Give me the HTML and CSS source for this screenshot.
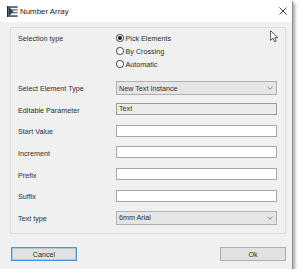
FILE: index.html
```html
<!DOCTYPE html>
<html>
<head>
<meta charset="utf-8">
<link rel="stylesheet" href="styles.css">
</head>
<body>
<div class="window">
  <div class="titlebar">
    <svg class="app-icon" width="11" height="11" viewBox="0 0 11 11">
      <rect x="0" y="0" width="1.6" height="11" fill="#1f2d3a"/>
      <polygon points="1.6,0.6 6.5,5.5 1.6,10.4" fill="#2c4254"/>
      <rect x="1.6" y="0.4" width="9" height="1.3" fill="#1f2d3a"/>
      <rect x="4" y="3.4" width="6.5" height="1.1" fill="#3b5366"/>
      <rect x="5" y="6.2" width="5.5" height="1.1" fill="#3b5366"/>
      <rect x="1.6" y="9.4" width="9" height="1.3" fill="#1f2d3a"/>
    </svg>
    <span class="title">Number Array</span>
    <svg class="close" width="8" height="8" viewBox="0 0 8 8">
      <path d="M0.5 0.5 L7.5 7.5 M7.5 0.5 L0.5 7.5" stroke="#2b2b2b" stroke-width="0.9" fill="none"/>
    </svg>
  </div>
  <div class="client">
    <div class="group">
      <div class="sel-row">
        <span class="label sel-label">Selection type</span>
        <div class="radios">
          <div class="radio"><span class="circle checked"></span>Pick Elements</div>
          <div class="radio"><span class="circle"></span>By Crossing</div>
          <div class="radio"><span class="circle"></span>Automatic</div>
        </div>
      </div>
      <div class="fields">
        <div class="row">
          <span class="label">Select Element Type</span>
          <div class="combo"><span>New Text Instance</span>
            <svg class="chev" width="6" height="4" viewBox="0 0 6 4"><path d="M0.5 0.8 L3 3.2 L5.5 0.8" stroke="#707070" stroke-width="0.8" fill="none"/></svg>
          </div>
        </div>
        <div class="row">
          <span class="label">Editable Parameter</span>
          <div class="textbox readonly">Text</div>
        </div>
        <div class="row">
          <span class="label">Start Value</span>
          <div class="textbox"></div>
        </div>
        <div class="row">
          <span class="label">Increment</span>
          <div class="textbox"></div>
        </div>
        <div class="row">
          <span class="label">Prefix</span>
          <div class="textbox"></div>
        </div>
        <div class="row">
          <span class="label">Suffix</span>
          <div class="textbox"></div>
        </div>
        <div class="row">
          <span class="label">Text type</span>
          <div class="combo"><span>6mm Arial</span>
            <svg class="chev" width="6" height="4" viewBox="0 0 6 4"><path d="M0.5 0.8 L3 3.2 L5.5 0.8" stroke="#707070" stroke-width="0.8" fill="none"/></svg>
          </div>
        </div>
      </div>
    </div>
    <div class="buttons">
      <div class="btn focused">Cancel</div>
      <div class="btn">Ok</div>
    </div>
  </div>
  <svg class="cursor" width="9" height="13" viewBox="0 0 9 13">
    <path d="M0.6 0.6 L0.6 10.4 L3 8.2 L4.6 11.8 L6.2 11.1 L4.7 7.6 L7.8 7.6 Z" fill="#ffffff" stroke="#333" stroke-width="0.8" stroke-linejoin="round"/>
  </svg>
</div>
</body>
</html>
```

FILE: styles.css
```css
html, body {
  margin: 0;
  padding: 0;
  background: #ffffff;
}

body {
  font-family: "Liberation Sans", Arial, sans-serif;
  font-size: 7.2px;
  color: #2e2e2e;
}

.window {
  position: relative;
  width: 292px;
  height: 269px;
  background: #f0f0f0;
  box-shadow: 1px 1px 0 #8c8c8c, 3px 3px 3px rgba(0, 0, 0, 0.35);
}

.titlebar {
  height: 22px;
  background: #ffffff;
  display: flex;
  align-items: center;
  padding-left: 7px;
  box-sizing: border-box;
}

.app-icon {
  display: block;
  flex: none;
}

.title {
  margin-left: 2px;
  font-size: 7.9px;
  color: #1a1a1a;
}

.close {
  display: block;
  margin-left: auto;
  margin-right: 5px;
}

.client {
  padding: 5px 6px 0 10px;
}

.group {
  box-sizing: border-box;
  height: 207px;
  border: 1px solid #dcdcdc;
  padding: 3.5px 0 0 7px;
}

.sel-row {
  display: flex;
  align-items: flex-start;
}

.label {
  width: 98px;
  flex: none;
  white-space: nowrap;
}

.sel-label {
  line-height: 13px;
}

.radios {
  display: flex;
  flex-direction: column;
}

.radio {
  height: 13px;
  display: flex;
  align-items: center;
  gap: 2px;
  white-space: nowrap;
}

.circle {
  width: 7.5px;
  height: 7.5px;
  box-sizing: border-box;
  border: 1px solid #3a3a3a;
  border-radius: 50%;
  background: #ffffff;
  display: flex;
  align-items: center;
  justify-content: center;
}

.circle.checked::after {
  content: "";
  width: 4px;
  height: 4px;
  border-radius: 50%;
  background: #1a1a1a;
}

.fields {
  margin-top: 10.5px;
  display: flex;
  flex-direction: column;
}

.row {
  height: 21.67px;
  display: flex;
  align-items: flex-start;
}

.row .label {
  line-height: 14px;
  padding-top: 1px;
}

.combo {
  width: 161px;
  height: 14px;
  box-sizing: border-box;
  border: 1px solid #b0b0b0;
  background: #e5e5e5;
  display: flex;
  align-items: center;
  justify-content: space-between;
  padding: 0 3px 0 2px;
  white-space: nowrap;
}

.chev {
  display: block;
}

.textbox {
  width: 161px;
  height: 12px;
  box-sizing: border-box;
  border: 1px solid #a6a6a6;
  background: #ffffff;
  padding-left: 2px;
  line-height: 10px;
  margin-top: 0.5px;
}

.textbox.readonly {
  background: #ececec;
  border-color: #9c9c9c;
}

.buttons {
  margin-top: 13px;
  padding-left: 1px;
  display: flex;
  justify-content: space-between;
}

.btn {
  width: 66px;
  height: 14px;
  box-sizing: border-box;
  border: 1px solid #adadad;
  background: #e1e1e1;
  display: flex;
  align-items: center;
  justify-content: center;
}

.btn.focused {
  border-color: #4a94da;
  box-shadow: inset 0 0 0 0.5px #7ab2e8;
}

.cursor {
  position: absolute;
  left: 270px;
  top: 30px;
}
```
